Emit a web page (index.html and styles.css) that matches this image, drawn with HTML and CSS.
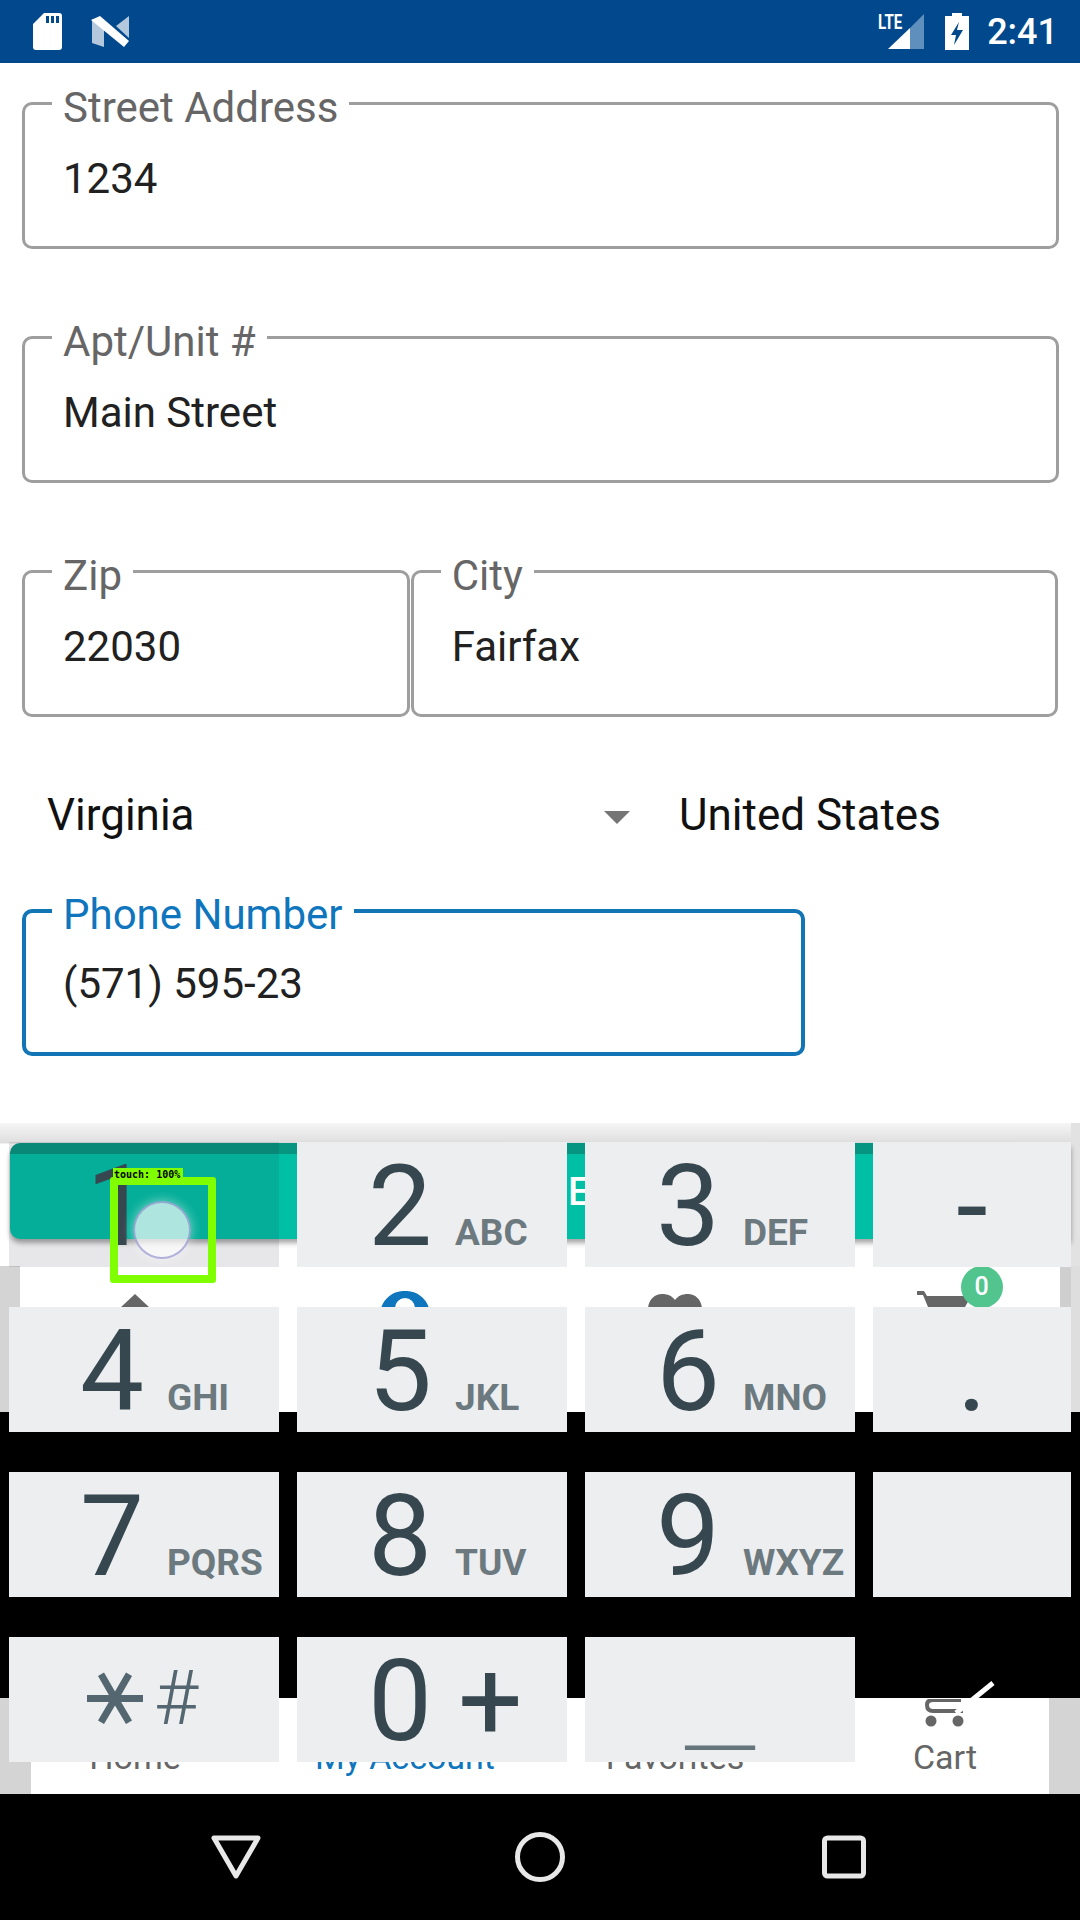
FILE: index.html
```html
<!DOCTYPE html>
<html lang="en">
<head>
  <meta charset="UTF-8" />
  <meta name="viewport" content="width=device-width, initial-scale=1.0"/>
  <title>Edit Address</title>
  <link rel="stylesheet" href="styles.css">
</head>
<body>
  <header class="status">
    <svg class="ic-sd" viewBox="0 0 29 37"><path fill="#fff" fill-rule="evenodd" d="M11 0H26a3 3 0 0 1 3 3V34a3 3 0 0 1-3 3H3a3 3 0 0 1-3-3V11zM13 3v7h3V3zM18 3v7h3V3zM23 3v7h3V3z"/></svg>
    <svg class="ic-n" viewBox="0 0 38 31"><path fill="#b3c8dc" d="M1 3 13 12V31L1 27z"/><path fill="#b3c8dc" d="M38 0V22L25 10z"/><path fill="#fff" d="M0 4 9 0 38 25 33 31z"/></svg>
    <span class="status-right">
      <span class="signal">
        <span class="lte">LTE</span>
        <svg class="ic-signal" viewBox="0 0 36 35"><path fill="#5f8fbc" d="M36 0V35H22V14z"/><path fill="#fff" d="M22 14V35H0z"/></svg>
      </span>
      <svg class="ic-batt" viewBox="0 0 24 37"><path fill="#fff" fill-rule="evenodd" d="M7 0H17V3H24V37H0V3H7zM14 9 6 22H11L9 32 18 17H12z"/></svg>
      <span class="clock">2:41</span>
    </span>
  </header>

  <main class="form">
    <div class="field">
      <span class="field-label">Street Address</span>
      <span class="field-value">1234</span>
    </div>
    <div class="field">
      <span class="field-label">Apt/Unit #</span>
      <span class="field-value">Main Street</span>
    </div>
    <div class="field-row">
      <div class="field zip">
        <span class="field-label">Zip</span>
        <span class="field-value">22030</span>
      </div>
      <div class="field city">
        <span class="field-label">City</span>
        <span class="field-value">Fairfax</span>
      </div>
    </div>
    <div class="select-row">
      <span class="select-state">Virginia<i class="arrow"></i></span>
      <span>United States</span>
    </div>
    <div class="field phone">
      <span class="field-label">Phone Number</span>
      <span class="field-value">(571) 595-23</span>
    </div>
  </main>

  <section class="lower">
    <div class="btn-area">
      <div class="save-btn"><span class="save-text">E</span></div>
    </div>

    <div class="tab-icons">
      <svg class="ic-home" viewBox="0 0 30 14"><path fill="#666" d="M15 0 30 14H0z"/></svg>
      <svg class="ic-person" viewBox="0 0 48 17"><path fill="#0f75bc" d="M24 0A24 24 0 0 1 48 17H34A10 10 0 0 0 14 17H0A24 24 0 0 1 24 0z"/></svg>
      <svg class="ic-heart" viewBox="0 0 54 14"><path fill="#666" d="M0 14C1 5 7 0 14 0 20 0 24 2 27 6 30 2 34 0 40 0 47 0 53 5 54 14z"/></svg>
      <span class="cart-top">
        <svg class="ic-cart" viewBox="0 0 52 16"><path fill="#666" d="M0 0H7L10 5H52V9L48 16H11L6 4H0z"/></svg>
        <b class="badge">0</b>
      </span>
    </div>

    <div class="black-band"></div>

    <div class="tab-labels">
      <span>Home</span>
      <span class="active">My Account</span>
      <span>Favorites</span>
      <span class="cart-label">
        <svg class="ic-cart-low" viewBox="0 0 40 28"><path fill="none" stroke="#666" stroke-width="4" d="M36 1H8Q2 1 2 6 2 12 8 12H38"/><circle fill="#666" cx="6" cy="22" r="5.500"/><circle fill="#666" cx="33" cy="22" r="5.500"/></svg>
        Cart
      </span>
    </div>

    <nav class="nav">
      <svg viewBox="0 0 60 50"><path fill="none" stroke="#e8e8e8" stroke-width="5" stroke-linejoin="round" d="M8 6H52L30 44z"/></svg>
      <svg viewBox="0 0 60 50"><circle fill="none" stroke="#e8e8e8" stroke-width="5" cx="30" cy="25" r="22.500"/></svg>
      <svg viewBox="0 0 60 50"><rect fill="none" stroke="#e8e8e8" stroke-width="5" x="10.500" y="6" width="39" height="38" rx="3"/></svg>
    </nav>
  </section>

  <!-- dial pad lies over the page, the page shows through where keys are missing -->
  <div class="dialpad">
    <div class="key pressed"><span class="digit one">1</span></div>
    <div class="key"><span class="digit">2</span><span class="abc">ABC</span></div>
    <div class="key"><span class="digit">3</span><span class="abc">DEF</span></div>
    <div class="key sym">-</div>
    <div class="key"><span class="digit">4</span><span class="abc">GHI</span></div>
    <div class="key"><span class="digit">5</span><span class="abc">JKL</span></div>
    <div class="key"><span class="digit">6</span><span class="abc">MNO</span></div>
    <div class="key sym">.</div>
    <div class="key"><span class="digit">7</span><span class="abc">PQRS</span></div>
    <div class="key"><span class="digit">8</span><span class="abc">TUV</span></div>
    <div class="key"><span class="digit">9</span><span class="abc">WXYZ</span></div>
    <div class="key"></div>
    <div class="key stars"><span class="star">⚹</span><span class="hash">#</span></div>
    <div class="key"><span class="digit">0</span><span class="plus">+</span></div>
    <div class="key space"><span class="under">_</span></div>
  </div>

  <svg class="done-check" viewBox="0 0 50 40"><path fill="none" stroke="#fff" stroke-width="5" d="M45 2 8 32"/></svg>

  <!-- touch debug marker -->
  <div class="touch-ripple"></div>
  <div class="touch-box"><span class="touch-tag">touch: 100%</span></div>
</body>
</html>
```

FILE: styles.css
```css
* {
  box-sizing: border-box;
}
body {
  margin: 0;
  width: 1080px;
  height: 1920px;
  position: relative;
  overflow: hidden;
  background: #fff;
  font-family: Roboto, sans-serif;
  color: #212121;
}

/* status bar */
.status {
  height: 63px;
  background: #01498c;
  display: flex;
  align-items: center;
  padding: 0 22px 0 33px;
}
.ic-sd {
  width: 29px;
  height: 37px;
  margin-top: -1px;
}
.ic-n {
  width: 38px;
  height: 31px;
  margin-left: 29px;
}
.status-right {
  margin-left: auto;
  display: flex;
  align-items: center;
}
.signal {
  position: relative;
  width: 46px;
  height: 35px;
}
.ic-signal {
  position: absolute;
  right: 0;
  top: 0;
  width: 36px;
  height: 35px;
}
.lte {
  position: absolute;
  left: 0;
  top: -4px;
  font-size: 21px;
  font-weight: 700;
  color: #fff;
  transform: scaleX(.72);
  transform-origin: left center;
}
.ic-batt {
  width: 24px;
  height: 37px;
  margin-left: 21px;
}
.clock {
  margin-left: 18px;
  color: #fff;
  font-size: 36px;
  font-weight: 500;
}

/* address form */
.form {
  height: 1060px;
  padding: 39px 22px 0;
}
.field {
  position: relative;
  width: 1037px;
  height: 147px;
  margin-bottom: 87px;
  border: 3px solid #9e9e9e;
  border-radius: 10px;
  padding: 46px 0 0 38px;
}
.field-label {
  position: absolute;
  left: 27px;
  top: -19px;
  padding: 0 11px;
  background: #fff;
  color: #666;
  font-size: 42px;
  line-height: 44px;
}
.field-value {
  display: block;
  font-size: 42px;
  line-height: 56px;
}
.field-row {
  display: flex;
  gap: 1px;
}
.zip {
  width: 388px;
}
.city {
  width: 648px;
}
.select-row {
  display: flex;
  align-items: center;
  height: 104px;
  margin: -41px 0 42px;
  padding-left: 25px;
  font-size: 44px;
  color: #111;
}
.select-state {
  width: 632px;
  position: relative;
}
.arrow {
  position: absolute;
  left: 557px;
  top: 22px;
  border-left: 13px solid transparent;
  border-right: 13px solid transparent;
  border-top: 13px solid #757575;
}
.phone {
  width: 783px;
  height: 147px;
  border: 4px solid #1275b5;
  padding: 43px 0 0 37px;
}
.phone .field-label {
  color: #0f75bc;
  left: 26px;
  top: -20px;
}

/* what shows below and behind the dial pad */
.lower {
  height: 797px;
}
.btn-area {
  height: 143px;
  padding: 20px 0 0 10px;
  background: linear-gradient(to right, transparent 1071px, #e2e2e2 1071px), linear-gradient(#f5f5f5, #dedede 20px, #fff 21px);
}
.save-btn {
  position: relative;
  width: 1061px;
  height: 96px;
  background: #00bfa5;
  border-top: 11px solid #06957f;
  border-radius: 10px 0 0 10px;
  box-shadow: 0 4px 5px rgba(0, 0, 0, .35);
  overflow: hidden;
}
.save-text {
  position: absolute;
  left: 558px;
  top: 16px;
  color: #fff;
  font-size: 38px;
  font-weight: 500;
}
.tab-icons {
  height: 146px;
  padding-top: 25px;
  display: grid;
  grid-template-columns: repeat(4, 270px);
  justify-items: center;
  background: linear-gradient(to right, #d4d4d4 20px, #fff 20px, #fff 1060px, #cfcfcf 1060px, #cfcfcf 1071px, #dedede 1071px);
}
.ic-home {
  width: 30px;
  height: 14px;
  margin-top: 3px;
}
.ic-person {
  width: 48px;
  height: 17px;
}
.ic-heart {
  width: 54px;
  height: 14px;
  margin-top: 3px;
}
.cart-top {
  position: relative;
  width: 52px;
  margin-left: -5px;
}
.ic-cart {
  position: absolute;
  left: 0;
  top: 0;
  width: 52px;
  height: 16px;
}
.badge {
  position: absolute;
  left: 44px;
  top: -25px;
  width: 42px;
  height: 42px;
  border-radius: 50%;
  background: #52c58f;
  color: #fff;
  font-size: 25px;
  font-weight: 500;
  line-height: 42px;
  text-align: center;
}
.black-band {
  height: 286px;
  background: #000;
}
.tab-labels {
  height: 96px;
  display: grid;
  grid-template-columns: repeat(4, 270px);
  justify-items: center;
  align-items: end;
  padding-bottom: 19px;
  font-size: 34px;
  line-height: 36px;
  color: #666;
  background: linear-gradient(to right, #d4d4d4 31px, #fff 31px, #fff 1049px, #d4d4d4 1049px);
}
.active {
  color: #0f75bc;
}
.cart-label {
  position: relative;
}
.ic-cart-low {
  position: absolute;
  left: 12px;
  top: -40px;
  width: 40px;
  height: 28px;
}
.nav {
  height: 126px;
  background: #000;
  display: flex;
  justify-content: center;
  align-items: center;
  gap: 244px;
}
.nav svg {
  width: 60px;
  height: 50px;
}

/* dial pad */
.dialpad {
  position: absolute;
  left: 9px;
  top: 1142px;
  display: grid;
  grid-template-columns: 270px 270px 270px 198px;
  grid-auto-rows: 125px;
  column-gap: 18px;
  row-gap: 40px;
}
.key {
  background: #eceef0;
  display: flex;
  align-items: baseline;
  padding-left: 71px;
  color: #37474f;
  line-height: 128px;
}
.digit {
  width: 87px;
  font-size: 114px;
}
.abc {
  font-size: 37px;
  font-weight: 700;
  color: #6c797f;
}
.pressed {
  background: rgba(40, 40, 60, .11);
}
.one {
  margin-left: 6px;
}
.sym {
  padding: 0;
  justify-content: center;
  font-size: 114px;
}
.stars {
  align-items: flex-start;
  padding-left: 76px;
  color: #546670;
}
.star {
  font-family: "DejaVu Sans", sans-serif;
  font-size: 100px;
  line-height: 104px;
  width: 69px;
}
.hash {
  font-size: 76px;
  font-weight: 300;
  line-height: 122px;
}
.plus {
  font-size: 114px;
  margin-left: 3px;
}
.space {
  padding: 0;
  justify-content: center;
  color: #66757c;
}
.under {
  font-size: 170px;
  font-weight: 100;
  line-height: 100px;
}

/* overlays */
.done-check {
  position: absolute;
  left: 948px;
  top: 1681px;
  width: 50px;
  height: 40px;
}
.touch-ripple {
  position: absolute;
  left: 133px;
  top: 1201px;
  width: 58px;
  height: 58px;
  border-radius: 50%;
  background: rgba(255, 255, 255, .68);
  border: 2px solid rgba(130, 130, 200, .6);
  box-shadow: 0 0 12px rgba(255, 255, 255, .5);
}
.touch-box {
  position: absolute;
  left: 110px;
  top: 1177px;
  width: 106px;
  height: 106px;
  border: 8px solid #7fff00;
  border-radius: 3px;
}
.touch-tag {
  position: absolute;
  left: -5px;
  top: -17px;
  padding: 0 1px;
  width: 70px;
  height: 13px;
  background: #7fff00;
  color: #000;
  font-family: "DejaVu Sans Mono", monospace;
  font-size: 10px;
  font-weight: 700;
  line-height: 13px;
  white-space: nowrap;
}
```
